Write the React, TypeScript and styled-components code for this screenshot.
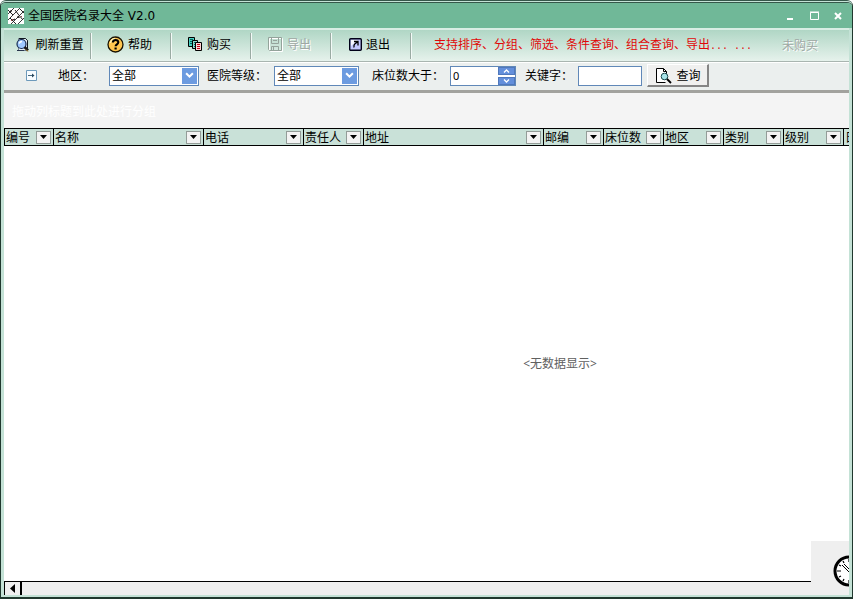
import React, { useState } from "react";
import styled, { createGlobalStyle } from "styled-components";

const GlobalStyle = createGlobalStyle`
  *, *::before, *::after { box-sizing: border-box; }
  html, body { margin: 0; background: #ffffff; }
  body, button, input, select, table {
    font-family: "Noto Sans", "Noto Sans CJK SC", sans-serif;
    font-size: 12px;
    line-height: 16px;
    color: #000000;
  }
  svg { display: block; flex: none; }
`;

const Window = styled.main`
  position: relative;
  display: flex;
  flex-direction: column;
  height: 100vh;
  padding: 0 3px 2px;
  border: 1px solid #20382e;
  border-top: 3px double #35574a;
  border-bottom-width: 2px;
  border-radius: 6px 6px 0 0;
  background: #c4e2d6;
  overflow: hidden;
`;

const TitleBar = styled.header`
  display: flex;
  align-items: center;
  flex: none;
  height: 25px;
  margin: 0 -3px;
  padding: 0 6px 0 7px;
  gap: 4px;
  background: #70b898;
`;

const Title = styled.h1`
  flex: 1;
  margin: 0;
  font-size: 12px;
  font-weight: 400;
  font-family: "DejaVu Sans", "Noto Sans CJK SC", sans-serif;
`;

const WindowButtons = styled.div`
  display: flex;
  gap: 8px;
`;

const PlainButton = styled.button`
  display: flex;
  align-items: center;
  justify-content: center;
  padding: 0;
  border: 0;
  background: transparent;
`;

const WindowButton = styled(PlainButton)`
  width: 16px;
  height: 16px;
`;

const ToolBar = styled.nav`
  display: flex;
  align-items: center;
  flex: none;
  height: 34px;
  padding-left: 7px;
  border-top: 2px solid #d9ede4;
  border-bottom: 1px solid #a9b5b0;
  background: linear-gradient(#b0d6c5, #e6f2ec);
`;

const ToolButton = styled(PlainButton)`
  width: 80px;
  height: 26px;
  padding: 0 2px 2px 0;
  gap: 4px;
  white-space: nowrap;
  border-right: 1px solid #9aaba3;
  box-shadow: 1px 0 0 #f3faf7;
  &:disabled {
    color: #a0a8a4;
    text-shadow: 1px 1px 0 #ffffff;
  }
`;

const Promo = styled.p`
  flex: 1;
  margin: 0 0 0 23px;
  white-space: nowrap;
  color: #e00808;
`;

const Dots = styled.span`
  font-family: "Liberation Mono", monospace;
  font-size: 10px;
`;

const Status = styled.span`
  margin-right: 31px;
  color: #a0a8a4;
  text-shadow: 1px 1px 0 #ffffff;
`;

const FilterBar = styled.form`
  display: flex;
  align-items: center;
  flex: none;
  height: 31px;
  padding: 0 0 2px 22px;
  border-top: 1px solid #ffffff;
  border-bottom: 3px solid #a2a29e;
  background: #ebefee;
  white-space: nowrap;
`;

const Label = styled.label<{ $before: number; $after: number }>`
  margin-left: ${(p) => p.$before}px;
  margin-right: ${(p) => p.$after}px;
`;

const Field = styled.div<{ $width: number }>`
  display: grid;
  grid-template-columns: 1fr 17px;
  width: ${(p) => p.$width}px;
  height: 20px;
  border: 1px solid #6088b8;
  background: #ffffff;
`;

const Select = styled.select`
  grid-area: 1 / 1 / 2 / 3;
  appearance: none;
  min-width: 0;
  padding: 1px 2px 0;
  border: 0;
  background: transparent;
`;

const SelectArrow = styled.span`
  grid-area: 1 / 2;
  display: flex;
  align-items: center;
  justify-content: center;
  margin: 1px;
  background: #6c9be0;
  pointer-events: none;
`;

const NumberInput = styled.input`
  min-width: 0;
  padding: 0 2px;
  border: 0;
  font-size: 11px;
  background: transparent;
`;

const Spinner = styled.div`
  display: grid;
  grid-template-rows: 1fr 1fr;
  gap: 2px;
`;

const SpinButton = styled(PlainButton)`
  background: #638fdb;
  border: 1px solid #5078bc;
`;

const KeywordInput = styled.input`
  width: 64px;
  height: 20px;
  padding: 0 3px;
  border: 1px solid #6088b8;
  background: #ffffff;
`;

const QueryButton = styled.button`
  display: flex;
  align-items: center;
  justify-content: center;
  gap: 5px;
  width: 62px;
  height: 23px;
  margin-left: 5px;
  padding: 1px 0 0;
  border: 1px solid #ffffff;
  border-right: 2px solid #858585;
  border-bottom: 2px solid #858585;
  background: #f0f0ef;
`;

const GroupPanel = styled.div`
  display: flex;
  align-items: center;
  flex: none;
  height: 35px;
  padding: 2px 8px 0;
  color: #ffffff;
  background: #f4f4f4;
`;

const GridView = styled.section`
  display: flex;
  flex: 1;
  min-height: 0;
  overflow: hidden;
  background: #ffffff;
`;

const Grid = styled.table`
  flex: none;
  width: 1112px;
  height: 100%;
  table-layout: fixed;
  border-collapse: separate;
  border-spacing: 0;
`;

const HeaderCell = styled.th<{ $width: number }>`
  width: ${(p) => p.$width}px;
  height: 18px;
  padding: 0;
  border: solid #000000;
  border-width: 1px 1px 1px 0;
  font-weight: 400;
  background: #c9e1d8;
  &:first-child { border-left-width: 1px; }
`;

const HeaderContent = styled.div`
  display: flex;
  align-items: center;
  justify-content: space-between;
  height: 16px;
  padding: 0 2px 0 1px;
  white-space: nowrap;
`;

const HeaderText = styled.span`
  padding-top: 2px;
`;

const DropButton = styled(PlainButton)`
  width: 15px;
  height: 13px;
  border: 1px solid #939c98;
  background: #f3f3f3;
`;

const EmptyCell = styled.td`
  padding: 1px 0 0;
  text-align: center;
  vertical-align: middle;
  color: #606060;
`;

const ScrollBar = styled.div`
  display: flex;
  flex: none;
  height: 14px;
  border: 1px solid #000000;
  border-bottom: 0;
  background: #efefef;
`;

const ScrollButton = styled(PlainButton)`
  width: 17px;
  border-right: 2px solid #000000;
`;

const ClockBadge = styled.div`
  position: absolute;
  right: 3px;
  bottom: 2px;
  display: flex;
  align-items: center;
  width: 38px;
  height: 54px;
  padding: 6px 0 0 22px;
  overflow: hidden;
  background: #efefef;
`;

const AppIcon = () => (
  <svg width="16" height="16" viewBox="0 0 16 16" fill="none" stroke="#222">
    <rect width="16" height="16" fill="#fff" stroke="none" />
    <path d="M0 6 6 0M0 12 12 0M3 16 16 3M10 16l6-6" strokeWidth=".9" />
    <path d="M0 2l5 5M2 10l6 6M7 2l3 4 5 6M12 1l4 4" strokeWidth="1" />
    <path d="M2 3h2M9 9h2v1M5 12l2-1" stroke="#000" />
    <path d="M3 13l2-2M13 8l1 1" stroke="#a55" />
  </svg>
);

const RefreshIcon = () => (
  <svg width="16" height="16" viewBox="0 0 16 16">
    <path d="M3.500 1.500h7l2 2v10h-9z" fill="#e4edf3" stroke="#718090" />
    <path d="M4 1.500h6.500l2 2v8" stroke="#101820" fill="none" />
    <circle cx="6.500" cy="7" r="4.500" fill="#9fc9ff" stroke="#142850" strokeWidth="1.200" />
    <path d="M4 6.500q1-2 3-2" stroke="#fff" strokeWidth="1.500" fill="none" />
    <path d="M9.500 10l3.500 3.500" stroke="#171717" strokeWidth="2.500" />
    <path d="M11 12.500l2 2" stroke="#d3a340" />
    <path d="M2 13.500h7" stroke="#28344c" />
  </svg>
);

const HelpIcon = () => (
  <svg width="17" height="17" viewBox="0 0 17 17">
    <circle cx="8.500" cy="8.500" r="7.500" fill="#ffc64f" stroke="#1a1300" strokeWidth="1.300" />
    <path d="M3.500 7Q4 3 8 2.500" fill="none" stroke="#fff0b0" strokeWidth="1.500" />
    <path d="M5.800 6.500C6 3.200 11.500 3.300 11.300 6.300c0 2-2.700 2-2.700 4" fill="none" stroke="#000" strokeWidth="2.100" />
    <path d="M7.500 11.500h2.200v2H7.500z" />
  </svg>
);

const BuyIcon = () => (
  <svg width="15" height="15" viewBox="0 0 15 15" stroke="#000">
    <path d="M.500.500h6v9h-6z" fill="#48cfc0" />
    <path d="M2 2.500h3M2 4.500h3M2 6.500h3" stroke="#00665c" />
    <path d="M4.500 3.500h5v8h-5z" fill="#8ed8cd" />
    <path d="M6 5.500h3M6 7.500h3M6 9.500h3" stroke="#006b62" />
    <path d="M7.500 5.500h6v8h-6z" fill="#ffd5d5" />
    <path d="M9 7.500h3M9 9.500h3M9 11.500h3" stroke="#c00018" />
  </svg>
);

const SaveIcon = () => (
  <svg width="15" height="15" viewBox="0 0 15 15" fill="none">
    <path d="M1.500 1.500h13v13h-12l-1-1z" stroke="#fff" />
    <path d="M.500.500h13v13h-12l-1-1z" stroke="#94a39b" />
    <path d="M3.500 1v5.500h7V1M3.500 13V9.500h7V13M5.500 10v3M5 3.500h4" stroke="#94a39b" />
  </svg>
);

const ExitIcon = () => (
  <svg width="13" height="13" viewBox="0 0 13 13">
    <rect x=".7" y=".7" width="11.600" height="11.600" rx="1" fill="#c4c8ff" stroke="#000018" strokeWidth="1.400" />
    <path d="M2 2h7L2 8z" fill="#f7f7ff" />
    <path d="M5 3.500h4v4M8.500 4L6 5.800Q4.500 7 5 9.500" fill="none" stroke="#000" strokeWidth="1.300" />
  </svg>
);

const ExpandIcon = () => (
  <svg width="11" height="11" viewBox="0 0 11 11" fill="none">
    <path d="M.500.500h10v10H.500z" fill="#f8fcff" stroke="#6d9abb" />
    <path d="M2 5.500h5" stroke="#47697f" />
    <path d="M6 3.500l2.500 2L6 7.500z" fill="#27465c" />
  </svg>
);

const QueryIcon = () => (
  <svg width="17" height="16" viewBox="0 0 17 16" fill="none">
    <path d="M10.500 14.500H1.500V.500h7l3 3v3" fill="#fff" stroke="#000" />
    <path d="M8.500.500v3h3" stroke="#000" />
    <circle cx="9.500" cy="8.500" r="3.300" fill="#a7e3e8" stroke="#18484c" />
    <path d="M12 11l4 4" stroke="#000" strokeWidth="1.800" />
  </svg>
);

const Chevron = () => (
  <svg width="9" height="7" viewBox="0 0 8 6" fill="none" stroke="#fff" strokeWidth="1.800">
    <path d="M1 1l3 3 3-3" />
  </svg>
);

const SpinChevron = ({ up = false }: { up?: boolean }) => (
  <svg width="7" height="4" viewBox="0 0 7 4" fill="none" stroke="#fff" strokeWidth="1.300">
    <path d={up ? "M1 3.500l2.500-2.500L6 3.500" : "M1 .5L3.500 3 6 .5"} />
  </svg>
);

const ClockIcon = () => (
  <svg width="32" height="32" viewBox="0 0 32 32" fill="none" stroke="#000">
    <circle cx="16" cy="16" r="14" fill="#fff" strokeWidth="3" />
    <path d="M16 4v3M4 16h4M16 25v3M10 6l1 2M6 10l2 1M6 22l2-1M10 26l1-2" strokeWidth="1.200" />
    <path d="M9 10l7 7M11 9l6 6M16 16l5 4" />
  </svg>
);

const columns = [
  { name: "编号", width: 50 },
  { name: "名称", width: 150 },
  { name: "电话", width: 100 },
  { name: "责任人", width: 60 },
  { name: "地址", width: 180 },
  { name: "邮编", width: 60 },
  { name: "床位数", width: 60 },
  { name: "地区", width: 60 },
  { name: "类别", width: 60 },
  { name: "级别", width: 60 },
  { name: "日期", width: 272 },
];

const tools = [
  { name: "刷新重置", icon: <RefreshIcon /> },
  { name: "帮助", icon: <HelpIcon /> },
  { name: "购买", icon: <BuyIcon /> },
  { name: "导出", icon: <SaveIcon />, disabled: true },
  { name: "退出", icon: <ExitIcon /> },
];

function Dropdown({ id, width }: { id: string; width: number }) {
  return (
    <Field $width={width}>
      <Select id={id}>
        <option>全部</option>
      </Select>
      <SelectArrow><Chevron /></SelectArrow>
    </Field>
  );
}

export default function App() {
  const [beds, setBeds] = useState(0);
  return (
    <>
      <GlobalStyle />
      <Window>
        <TitleBar>
          <AppIcon />
          <Title>全国医院名录大全 V2.0</Title>
          <WindowButtons>
            <WindowButton aria-label="最小化">
              <svg width="10" height="10"><path d="M2 8h6" stroke="#fff" strokeWidth="2" /></svg>
            </WindowButton>
            <WindowButton aria-label="最大化">
              <svg width="10" height="10" fill="none" stroke="#fff"><path d="M1.500 1.500h8v7h-8zM1 1h9" /></svg>
            </WindowButton>
            <WindowButton aria-label="关闭">
              <svg width="10" height="10"><path d="M2 2l6 6M8 2L2 8" stroke="#fff" strokeWidth="2" /></svg>
            </WindowButton>
          </WindowButtons>
        </TitleBar>

        <ToolBar>
          {tools.map((t) => (
            <ToolButton key={t.name} disabled={t.disabled}>
              {t.icon}
              {t.name}
            </ToolButton>
          ))}
          <Promo>
            支持排序、分组、筛选、条件查询、组合查询、导出<Dots>... ...</Dots>
          </Promo>
          <Status>未购买</Status>
        </ToolBar>

        <FilterBar onSubmit={(e) => e.preventDefault()}>
          <PlainButton type="button" aria-label="展开"><ExpandIcon /></PlainButton>
          <Label htmlFor="region" $before={21} $after={15}>地区：</Label>
          <Dropdown id="region" width={90} />
          <Label htmlFor="level" $before={8} $after={7}>医院等级：</Label>
          <Dropdown id="level" width={85} />
          <Label htmlFor="beds" $before={13} $after={6}>床位数大于：</Label>
          <Field $width={66}>
            <NumberInput
              id="beds"
              inputMode="numeric"
              value={beds}
              onChange={(e) => setBeds(Number(e.target.value) || 0)}
            />
            <Spinner>
              <SpinButton type="button" aria-label="增加" onClick={() => setBeds(beds + 1)}><SpinChevron up /></SpinButton>
              <SpinButton type="button" aria-label="减少" onClick={() => setBeds(Math.max(0, beds - 1))}><SpinChevron /></SpinButton>
            </Spinner>
          </Field>
          <Label htmlFor="keyword" $before={9} $after={5}>关键字：</Label>
          <KeywordInput id="keyword" type="text" />
          <QueryButton type="submit"><QueryIcon />查询</QueryButton>
        </FilterBar>

        <GroupPanel>拖动列标题到此处进行分组</GroupPanel>

        <GridView>
          <Grid>
            <thead>
              <tr>
                {columns.map((c) => (
                  <HeaderCell key={c.name} $width={c.width} scope="col">
                    <HeaderContent>
                      <HeaderText>{c.name}</HeaderText>
                      <DropButton aria-label={`筛选${c.name}`}>
                        <svg width="7" height="4"><path d="M0 0h7L3.500 4z" /></svg>
                      </DropButton>
                    </HeaderContent>
                  </HeaderCell>
                ))}
              </tr>
            </thead>
            <tbody>
              <tr>
                <EmptyCell colSpan={columns.length}>&lt;无数据显示&gt;</EmptyCell>
              </tr>
            </tbody>
          </Grid>
        </GridView>

        <ScrollBar>
          <ScrollButton aria-label="向左滚动">
            <svg width="5" height="9"><path d="M5 0v9L0 4.500z" /></svg>
          </ScrollButton>
        </ScrollBar>

        <ClockBadge><ClockIcon /></ClockBadge>
      </Window>
    </>
  );
}
